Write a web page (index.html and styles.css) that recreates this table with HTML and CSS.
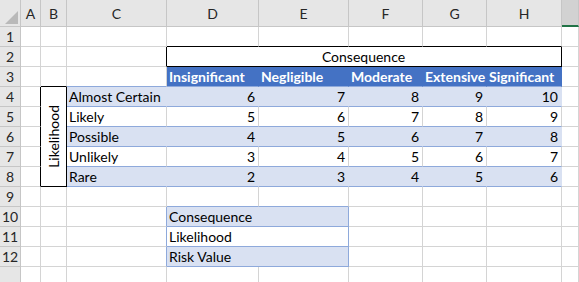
FILE: index.html
```html
<!DOCTYPE html>
<html>
<head>
<meta charset="utf-8">
<title>Risk Matrix</title>
<link rel="stylesheet" href="styles.css">
</head>
<body>
<div class="sheet">
  <!-- column headers -->
  <div class="corner"><span class="tri"></span></div>
  <div class="ch">A</div><div class="ch">B</div><div class="ch">C</div><div class="ch">D</div><div class="ch">E</div><div class="ch">F</div><div class="ch">G</div><div class="ch">H</div><div class="ch ch-sel"></div>

  <!-- row 1 -->
  <div class="rh">1</div>
  <div class="c"></div><div class="c"></div><div class="c"></div><div class="c bb-k"></div><div class="c bb-k"></div><div class="c bb-k"></div><div class="c bb-k"></div><div class="c bb-k"></div><div class="c"></div>

  <!-- row 2 -->
  <div class="rh">2</div>
  <div class="c"></div><div class="c"></div><div class="c br-k"></div>
  <div class="c span5 boxed center">Consequence</div>
  <div class="c"></div>

  <!-- row 3 -->
  <div class="rh">3</div>
  <div class="c"></div><div class="c bb-k"></div><div class="c bb-t"></div>
  <div class="c hd">Insignificant</div><div class="c hd">Negligible</div><div class="c hd">Moderate</div><div class="c hd">Extensive</div><div class="c hd">Significant</div>
  <div class="c"></div>

  <!-- row 4 -->
  <div class="rh">4</div>
  <div class="c br-k"></div>
  <div class="c span-rows boxed vert"><span class="vtext">Likelihood</span></div>
  <div class="c band">Almost Certain</div>
  <div class="c band num">6</div><div class="c band num">7</div><div class="c band num">8</div><div class="c band num">9</div><div class="c band num">10</div>
  <div class="c"></div>

  <!-- row 5 -->
  <div class="rh">5</div>
  <div class="c br-k"></div>
  <div class="c plain">Likely</div>
  <div class="c plain num">5</div><div class="c plain num">6</div><div class="c plain num">7</div><div class="c plain num">8</div><div class="c plain num">9</div>
  <div class="c"></div>

  <!-- row 6 -->
  <div class="rh">6</div>
  <div class="c br-k"></div>
  <div class="c band">Possible</div>
  <div class="c band num">4</div><div class="c band num">5</div><div class="c band num">6</div><div class="c band num">7</div><div class="c band num">8</div>
  <div class="c"></div>

  <!-- row 7 -->
  <div class="rh">7</div>
  <div class="c br-k"></div>
  <div class="c plain">Unlikely</div>
  <div class="c plain num">3</div><div class="c plain num">4</div><div class="c plain num">5</div><div class="c plain num">6</div><div class="c plain num">7</div>
  <div class="c"></div>

  <!-- row 8 -->
  <div class="rh">8</div>
  <div class="c br-k"></div>
  <div class="c band">Rare</div>
  <div class="c band num">2</div><div class="c band num">3</div><div class="c band num">4</div><div class="c band num">5</div><div class="c band num">6</div>
  <div class="c"></div>

  <!-- row 9 -->
  <div class="rh">9</div>
  <div class="c"></div><div class="c"></div><div class="c"></div><div class="c bb-t"></div><div class="c bb-t"></div><div class="c"></div><div class="c"></div><div class="c"></div><div class="c"></div>

  <!-- rows 10-12: input block -->
  <div class="rh">10</div>
  <div class="c"></div><div class="c"></div><div class="c br-t"></div>
  <div class="c span2 cellbox band">Consequence</div>
  <div class="c"></div><div class="c"></div><div class="c"></div><div class="c"></div>

  <div class="rh">11</div>
  <div class="c"></div><div class="c"></div><div class="c br-t"></div>
  <div class="c span2 cellbox">Likelihood</div>
  <div class="c"></div><div class="c"></div><div class="c"></div><div class="c"></div>

  <div class="rh">12</div>
  <div class="c"></div><div class="c"></div><div class="c br-t"></div>
  <div class="c span2 cellbox band">Risk Value</div>
  <div class="c"></div><div class="c"></div><div class="c"></div><div class="c"></div>

  <!-- row 13 (partly visible) -->
  <div class="rh"></div>
  <div class="c"></div><div class="c"></div><div class="c"></div><div class="c"></div><div class="c"></div><div class="c"></div><div class="c"></div><div class="c"></div><div class="c"></div>
</div>
</body>
</html>
```

FILE: styles.css
```css
:root {
  --grid: #d4d4d4;
  --hdr-bg: #e6e6e6;
  --hdr-line: #c6c6c6;
  --tbl-head: #4472c4;
  --tbl-band: #d9e1f2;
  --tbl-line: #8ea9db;
}

html, body {
  margin: 0;
  padding: 0;
  background: #fff;
  overflow: hidden;
}

.sheet {
  display: grid;
  grid-template-columns: 21px 20px 26px 100px 92px 90px 74px 64px 75px 1fr;
  grid-template-rows: 27px repeat(13, 20px);
  width: 579px;
  font-family: Lato, "Liberation Sans", sans-serif;
  font-size: 14px;
  color: #000;
}

.sheet > div {
  box-sizing: border-box;
  min-width: 0;
}

/* headers */
.corner {
  background: var(--hdr-bg);
  border-right: 1px solid var(--hdr-line);
  border-bottom: 1px solid var(--hdr-line);
  display: flex;
  align-items: flex-end;
  justify-content: flex-end;
  padding: 0 2px 2px 0;
}
.tri {
  width: 0;
  height: 0;
  border-left: 13px solid transparent;
  border-bottom: 13px solid #b9b9b9;
}
.ch {
  background: var(--hdr-bg);
  border-right: 1px solid var(--hdr-line);
  border-bottom: 1px solid var(--hdr-line);
  text-align: center;
  line-height: 26px;
  padding-top: 1px;
  color: #262626;
}
.ch-sel {
  background: #d2d2d2;
  border-bottom: 2px solid #217346;
}
.rh {
  background: var(--hdr-bg);
  border-right: 1px solid var(--hdr-line);
  border-bottom: 1px solid var(--hdr-line);
  text-align: center;
  line-height: 20px;
  color: #262626;
}

/* plain cells */
.c {
  border-right: 1px solid var(--grid);
  border-bottom: 1px solid var(--grid);
  line-height: 20px;
  padding: 0 3px 0 2px;
  white-space: nowrap;
}
.num { text-align: right; }
.center { text-align: center; }

/* merges */
.span5 { grid-column: span 5; }
.span2 { grid-column: span 2; }
.span-rows { grid-row: span 5; }

/* black outlined merged cells */
.boxed {
  border-right-color: #000;
  border-bottom-color: #000;
}
.br-k { border-right-color: #000; }
.bb-k { border-bottom-color: #000; }
.br-t { border-right-color: var(--tbl-line); }
.bb-t { border-bottom-color: var(--tbl-line); }

.vert {
  display: flex;
  align-items: center;
  justify-content: center;
  padding: 0;
}
.vtext {
  writing-mode: vertical-rl;
  transform: rotate(180deg);
  line-height: 22px;
}

/* table */
.hd {
  background: var(--tbl-head);
  border-right-color: var(--tbl-head);
  border-bottom-color: var(--tbl-line);
  color: #fff;
  font-weight: 700;
}
.band {
  background: var(--tbl-band);
  border-right-color: var(--tbl-band);
  border-bottom-color: var(--tbl-line);
}
.plain {
  border-bottom-color: var(--tbl-line);
}
.cellbox {
  border-right-color: var(--tbl-line);
  border-bottom-color: var(--tbl-line);
}
```
